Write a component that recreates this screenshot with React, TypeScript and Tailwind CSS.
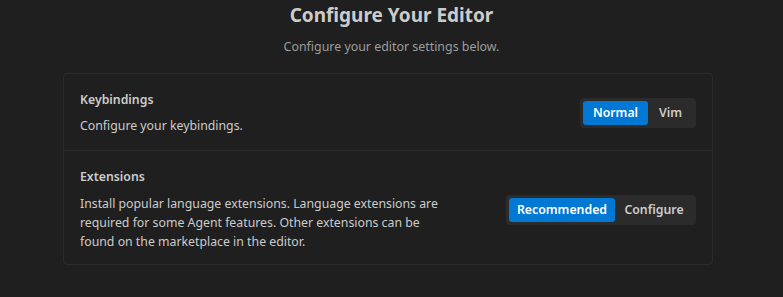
import React from "react";

function Toggle({ options, active, widths }: { options: string[]; active: number; widths: number[] }) {
  return (
    <div className="flex shrink-0 items-center rounded-[4px] bg-[#2b2b2b] p-[3px]">
      {options.map((o, i) => (
        <div
          key={o}
          style={{ width: widths[i] }}
          className={
            i === active
              ? "h-[24px] rounded-[3px] bg-[#0078d4] text-center text-[12.3px] font-semibold leading-[24px] text-white"
              : "h-[24px] rounded-[3px] text-center text-[12.3px] font-semibold leading-[24px] text-[#cccccc]"
          }
        >
          {o}
        </div>
      ))}
    </div>
  );
}

export default function App() {
  return (
    <div
      className="h-[297px] w-[783px] bg-[#1f1f1f] text-[#cccccc]"
      style={{ fontFamily: '"Noto Sans", "Open Sans", sans-serif' }}
    >
      <div className="pt-[1px] text-center text-[19px] font-bold leading-[28px] text-[#cccccc]">
        Configure Your Editor
      </div>
      <div className="mt-[9px] text-center text-[12.4px] leading-[18px] text-[#9d9d9d]">
        Configure your editor settings below.
      </div>
      <div className="ml-[63px] mt-[17px] w-[650px] rounded-[4px] border border-[#2b2b2b]">
        <div className="flex items-center justify-between px-[16px] pb-[15px] pt-[17px]">
          <div>
            <div className="text-[12.3px] font-semibold leading-[18px] text-[#cccccc]">Keybindings</div>
            <div className="mt-[8px] text-[12.3px] leading-[18px] text-[#cccccc]">Configure your keybindings.</div>
          </div>
          <Toggle options={["Normal", "Vim"]} active={0} widths={[65, 45]} />
        </div>
        <div className="border-t border-[#2b2b2b]" />
        <div className="flex items-center justify-between px-[16px] pb-[13px] pt-[17px]">
          <div className="w-[360px]">
            <div className="text-[12.3px] font-semibold leading-[18px] text-[#cccccc]">Extensions</div>
            <div className="mt-[8px] text-[12.3px] leading-[19px] text-[#cccccc]">
              Install popular language extensions. Language extensions are required for some Agent features. Other
              extensions can be found on the marketplace in the editor.
            </div>
          </div>
          <Toggle options={["Recommended", "Configure"]} active={0} widths={[106, 78]} />
        </div>
      </div>
    </div>
  );
}
